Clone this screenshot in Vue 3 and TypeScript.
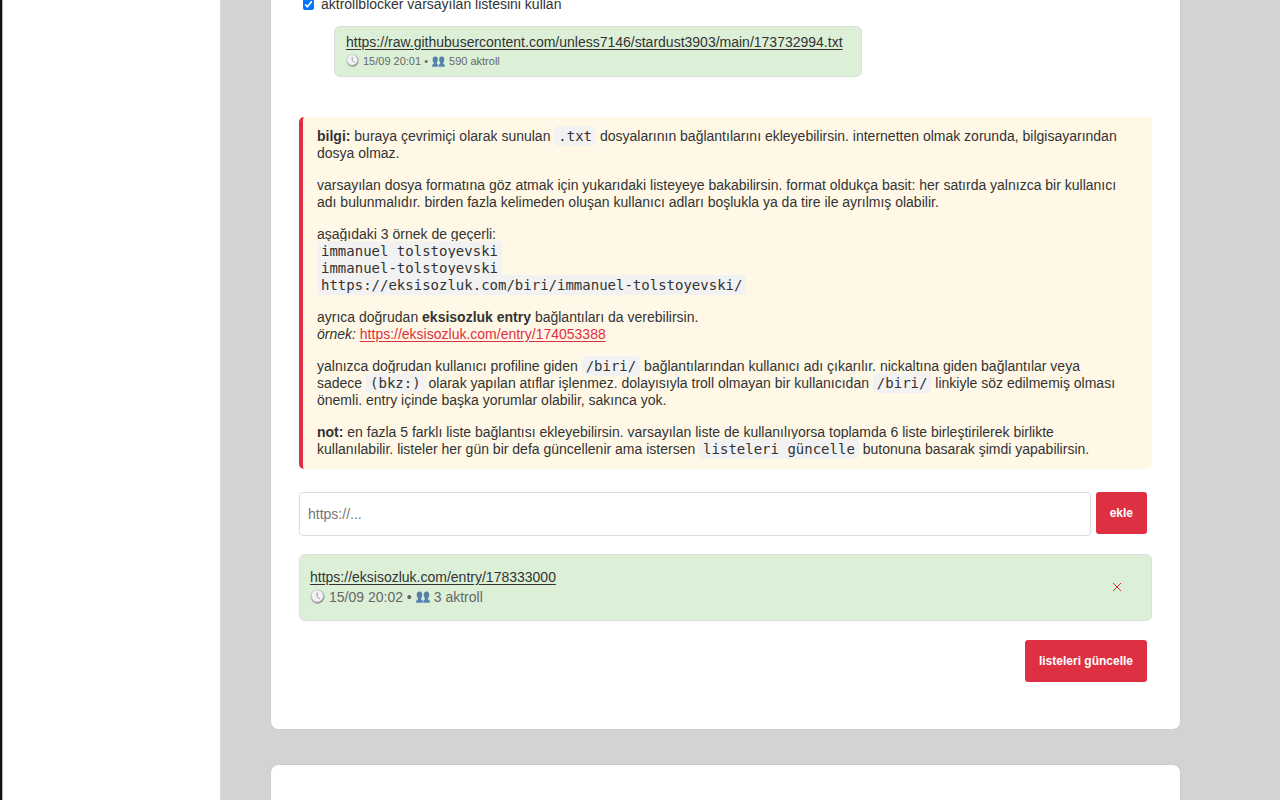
<script setup lang="ts">
import { ref } from 'vue'

interface SourceList {
  url: string
  updated: string
  count: number
}

const useDefault = ref(true)
const newUrl = ref('')
const defaultList: SourceList = {
  url: 'https://raw.githubusercontent.com/unless7146/stardust3903/main/173732994.txt',
  updated: '15/09 20:01',
  count: 590,
}
const lists = ref<SourceList[]>([
  { url: 'https://eksisozluk.com/entry/178333000', updated: '15/09 20:02', count: 3 },
])

function addList() {
  const url = newUrl.value.trim()
  if (!url || lists.value.length >= 5) return
  lists.value.push({ url, updated: '', count: 0 })
  newUrl.value = ''
}

function removeList(index: number) {
  lists.value.splice(index, 1)
}
</script>

<template>
  <svg class="symbols" aria-hidden="true">
    <defs>
      <radialGradient id="rim" cx="0.4" cy="0.3" r="0.75">
        <stop offset="0" stop-color="#f0f0f2" />
        <stop offset="0.75" stop-color="#b4b4b9" />
        <stop offset="1" stop-color="#77777c" />
      </radialGradient>
      <linearGradient id="bust" x1="0" y1="0" x2="0" y2="1">
        <stop offset="0" stop-color="#557f9d" />
        <stop offset="1" stop-color="#5584b8" />
      </linearGradient>
      <symbol id="clock" viewBox="0 0 16 16">
        <circle cx="8" cy="8" r="7.7" fill="url(#rim)" />
        <circle cx="7.8" cy="7.6" r="6" fill="#f3f3f4" />
        <path d="M7.6 3.5V8l3 2.6" fill="none" stroke="#8b8b90" stroke-width="1" />
      </symbol>
      <symbol id="people" viewBox="0 0 16 14" preserveAspectRatio="none">
        <g fill="url(#bust)">
          <path d="M4 .5c2.200 0 3.300 1.600 3.200 4 0 1.800-.6 3-1.300 3.800v1.500c1 .5 1.800 1 1.800 2.400v1.500H.2v-1.500c0-1.400.9-1.900 2-2.400V8.300C1.300 7.500.8 6.300.8 4.500c0-2.400 1-4 3.200-4z" />
          <path d="M12 .5c2.200 0 3.200 1.600 3.200 4 0 1.800-.5 3-1.400 3.800v1.500c1.100.5 2 1 2 2.400v1.500H8.300v-1.500c0-1.400.8-1.900 1.800-2.400V8.300c-.7-.8-1.300-2-1.300-3.800 0-2.400 1-4 3.200-4z" />
        </g>
      </symbol>
    </defs>
  </svg>

  <div class="page">
    <aside class="sidebar"></aside>
    <main class="content">
      <section class="card">
        <label class="toggle">
          <input v-model="useDefault" type="checkbox" />
          <span>aktrollblocker varsayılan listesini kullan</span>
        </label>

        <div class="source compact">
          <div>
            <a :href="defaultList.url">{{ defaultList.url }}</a>
            <div class="meta">
              <svg class="clock"><use href="#clock" /></svg>
              <span>{{ defaultList.updated }} •</span>
              <svg class="people"><use href="#people" /></svg>
              <span>{{ defaultList.count }} aktroll</span>
            </div>
          </div>
        </div>

        <div class="info">
          <p>
            <b>bilgi:</b> buraya çevrimiçi olarak sunulan <code>.txt</code> dosyalarının
            bağlantılarını ekleyebilirsin. internetten olmak zorunda, bilgisayarından<br />
            dosya olmaz.
          </p>
          <p>
            varsayılan dosya formatına göz atmak için yukarıdaki listeyeye bakabilirsin. format
            oldukça basit: her satırda yalnızca bir kullanıcı<br />
            adı bulunmalıdır. birden fazla kelimeden oluşan kullanıcı adları boşlukla ya da tire
            ile ayrılmış olabilir.
          </p>
          <p>
            aşağıdaki 3 örnek de geçerli:<br />
            <code>immanuel tolstoyevski</code><br />
            <code>immanuel-tolstoyevski</code><br />
            <code>https://eksisozluk.com/biri/immanuel-tolstoyevski/</code>
          </p>
          <p>
            ayrıca doğrudan <b>eksisozluk entry</b> bağlantıları da verebilirsin.<br />
            <i>örnek:</i>&#32;<a href="https://eksisozluk.com/entry/174053388">https://eksisozluk.com/entry/174053388</a>
          </p>
          <p>
            yalnızca doğrudan kullanıcı profiline giden <code>/biri/</code> bağlantılarından
            kullanıcı adı çıkarılır. nickaltına giden bağlantılar veya<br />
            sadece <code>(bkz:)</code> olarak yapılan atıflar işlenmez. dolayısıyla troll olmayan
            bir kullanıcıdan <code>/biri/</code> linkiyle söz edilmemiş olması<br />
            önemli. entry içinde başka yorumlar olabilir, sakınca yok.
          </p>
          <p>
            <b>not:</b> en fazla 5 farklı liste bağlantısı ekleyebilirsin. varsayılan liste de
            kullanılıyorsa toplamda 6 liste birleştirilerek birlikte<br />
            kullanılabilir. listeler her gün bir defa güncellenir ama istersen
            <code>listeleri güncelle</code> butonuna basarak şimdi yapabilirsin.
          </p>
        </div>

        <form class="add" @submit.prevent="addList">
          <input v-model="newUrl" type="text" placeholder="https://..." aria-label="liste bağlantısı" />
          <button class="primary" type="submit">ekle</button>
        </form>

        <div v-for="(list, i) in lists" :key="list.url" class="source">
          <div>
            <a :href="list.url">{{ list.url }}</a>
            <div class="meta">
              <svg class="clock"><use href="#clock" /></svg>
              <span>{{ list.updated }} •</span>
              <svg class="people"><use href="#people" /></svg>
              <span>{{ list.count }} aktroll</span>
            </div>
          </div>
          <button class="remove" type="button" aria-label="sil" @click="removeList(i)">
            <svg viewBox="0 0 10 10"><path d="M1 1l8 8M9 1L1 9" /></svg>
          </button>
        </div>

        <div class="actions">
          <button class="primary" type="button">listeleri güncelle</button>
        </div>
      </section>
      <section class="card next"></section>
    </main>
  </div>
</template>

<style>
body {
  margin: 0;
}
</style>

<style scoped>
.symbols {
  position: absolute;
  width: 0;
  height: 0;
}
.page {
  display: flex;
  height: 100vh;
  overflow: hidden;
  background: #d3d3d3;
  color: #333;
  font: 14px/17px "Liberation Sans", Arial, sans-serif;
}
.sidebar {
  box-sizing: border-box;
  flex: 0 0 220px;
  background: #fff;
  border-left: 2px solid #131315;
  box-shadow: inset 1px 0 #b5b5b5, 1px 0 #dcdcdc;
}
.content {
  flex: 1;
  min-width: 0;
  padding: 0 100px 0 51px;
}
.card {
  padding: 12px 28px 47px;
  margin-top: -20px;
  background: #fff;
  border-radius: 7px;
  box-shadow: 0 0 1px rgba(0, 0, 0, 0.2);
}
.card.next {
  height: 300px;
  margin-top: 36px;
}
.toggle {
  display: flex;
  align-items: center;
  gap: 7px;
  height: 24px;
  padding-left: 4px;
}
.toggle input {
  width: 11px;
  height: 11px;
  margin: 0;
  accent-color: #0075ff;
}
.source {
  box-sizing: border-box;
  display: flex;
  align-items: center;
  justify-content: space-between;
  min-height: 67px;
  padding: 11px 29px 13px 10px;
  margin-top: 18px;
  background: #dcf0d8;
  border: 1px solid #dcdfdc;
  border-radius: 6px;
}
.source a {
  display: block;
  color: #333;
  line-height: 20px;
}
.source.compact {
  width: fit-content;
  min-height: 51px;
  padding: 4px 18px 6px 11px;
  margin: 10px 0 40px 35px;
}
.meta {
  display: flex;
  align-items: center;
  gap: 4px;
  color: #666;
  line-height: 20px;
}
.compact .meta {
  font-size: 11px;
  line-height: 18px;
}
.clock {
  width: 15px;
  height: 15px;
}
.people {
  width: 14px;
  height: 12px;
  padding-top: 1px;
}
.compact .clock {
  width: 13px;
  height: 13px;
}
.compact .people {
  width: 13px;
  height: 11px;
}
.info {
  display: flex;
  flex-direction: column;
  gap: 15px;
  padding: 11px 14px;
  background: #fff8e6;
  border-left: 4px solid #df2f43;
  border-radius: 5px;
}
.info p {
  margin: 0;
}
.info a {
  color: #df2f43;
}
a {
  text-decoration: underline;
  text-underline-offset: 2px;
}
code {
  padding: 2px 4px;
  background: #f2f2f2;
  border-radius: 4px;
  font: 14px/16px "DejaVu Sans Mono", monospace;
}
.add {
  display: flex;
  align-items: flex-start;
  gap: 5px;
  margin-top: 23px;
  padding-right: 5px;
}
.add input {
  box-sizing: border-box;
  flex: 1;
  min-width: 0;
  height: 44px;
  padding: 0 8px;
  background: #fff;
  border: 1px solid #dcdcdc;
  border-radius: 4px;
  color: #333;
  font: inherit;
}
.add input::placeholder {
  color: #757575;
}
.primary {
  height: 42px;
  padding: 0 14px;
  background: #df2f43;
  border: 0;
  border-radius: 3px;
  color: #fff;
  font: bold 12px/16px "Liberation Sans", Arial, sans-serif;
}
.remove {
  display: flex;
  padding: 0;
  background: none;
  border: 0;
}
.remove svg {
  width: 10px;
  height: 10px;
  fill: none;
  stroke: #df2f43;
  stroke-width: 1;
}
.actions {
  display: flex;
  justify-content: flex-end;
  padding-right: 5px;
  margin-top: 19px;
}
</style>
